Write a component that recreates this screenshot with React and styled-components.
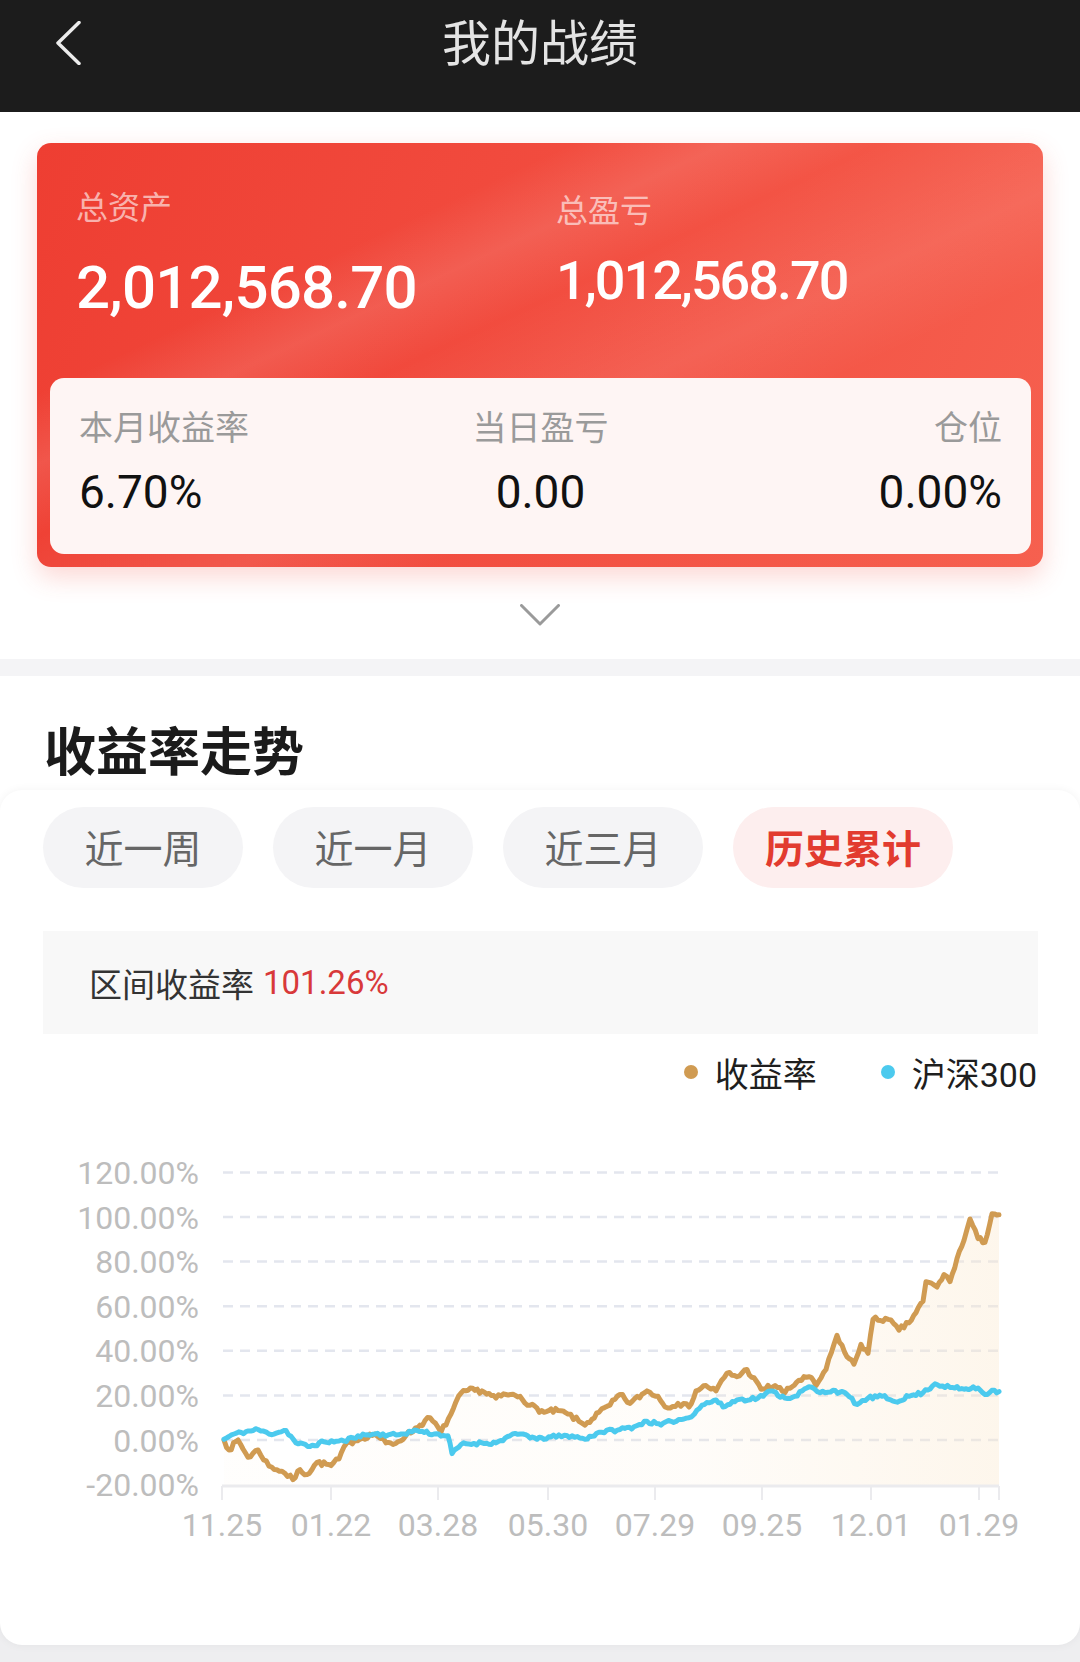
import styled, { createGlobalStyle } from "styled-components";

const GlobalStyle = createGlobalStyle`
  body {
    margin: 0;
    background: #f1f1f3;
    font-family: Roboto, "Noto Sans CJK SC", sans-serif;
  }
`;

const Page = styled.div`
  width: 1080px;
  margin: 0 auto;
`;

const Header = styled.header`
  height: 112px;
  background: #1c1c1c;
  display: grid;
  grid-template-columns: 1fr auto 1fr;
  align-items: start;
`;

const BackButton = styled.button`
  justify-self: start;
  border: 0;
  background: none;
  padding: 21px 0 0 55px;
  cursor: pointer;
  svg {
    display: block;
  }
`;

const Title = styled.h1`
  margin: 0;
  font-size: 49px;
  line-height: 90px;
  font-weight: 400;
  color: #e4e4e4;
`;

const SummarySection = styled.section`
  background: #fff;
  padding: 31px 37px 0;
`;

const AssetCard = styled.div`
  height: 424px;
  box-sizing: border-box;
  border-radius: 14px;
  display: flex;
  flex-direction: column;
  box-shadow: 0 10px 26px rgba(242, 72, 58, 0.22);
  background:
    linear-gradient(
      155deg,
      rgba(255, 255, 255, 0) 28%,
      rgba(255, 255, 255, 0.11) 36%,
      rgba(255, 255, 255, 0) 44%,
      rgba(255, 255, 255, 0.09) 58%,
      rgba(255, 255, 255, 0) 68%
    ),
    linear-gradient(110deg, #ee3e32 0%, #f14a3d 40%, #f6604f 100%);
`;

const TopArea = styled.div`
  height: 235px;
  display: grid;
  grid-template-columns: 480px 1fr;
  padding-left: 39px;
`;

const TopColumn = styled.div`
  display: flex;
  flex-direction: column;
  padding-top: ${(p) => p.$top}px;
`;

const TopLabel = styled.div`
  font-size: 32px;
  line-height: 44px;
  color: rgba(255, 255, 255, 0.62);
`;

const Amount = styled.div`
  margin-top: ${(p) => p.$gap}px;
  font-size: ${(p) => p.$size}px;
  line-height: ${(p) => p.$size * 1.2}px;
  letter-spacing: ${(p) => p.$spacing}px;
  font-weight: 500;
  color: #fff;
`;

const StatsPanel = styled.div`
  margin: 0 12px 13px 13px;
  height: 176px;
  box-sizing: border-box;
  border-radius: 14px;
  background: #fef5f4;
  padding: 27px 29px 0;
  display: grid;
  grid-template-columns: repeat(3, 1fr);
`;

const Stat = styled.div`
  display: flex;
  flex-direction: column;
  align-items: ${(p) => p.$align};
`;

const StatLabel = styled.div`
  font-size: 34px;
  line-height: 46px;
  color: #9a9a9a;
`;

const StatValue = styled.div`
  margin-top: 13px;
  font-size: 46px;
  line-height: 56px;
  color: #111;
`;

const ExpandRow = styled.div`
  height: 92px;
  box-sizing: border-box;
  padding-top: 37px;
  display: flex;
  justify-content: center;
  svg {
    display: block;
  }
`;

const Divider = styled.div`
  height: 17px;
  background: #f4f4f6;
`;

const TrendSection = styled.section`
  padding: 48px 0 17px;
  background: linear-gradient(
    to bottom,
    #fff calc(100% - 40px),
    #eeeef0 calc(100% - 40px)
  );
`;

const SectionTitle = styled.h2`
  margin: 0 0 0 44px;
  font-size: 52px;
  line-height: 60px;
  font-weight: 700;
  color: #1b1b1b;
`;

const ChartCard = styled.div`
  margin-top: 6px;
  height: 855px;
  box-sizing: border-box;
  padding: 17px 0 90px;
  background: #fff;
  border-radius: 22px;
  box-shadow: 0 0 10px rgba(0, 0, 0, 0.05);
`;

const Tabs = styled.div`
  display: flex;
  gap: 30px;
  padding: 0 43px;
`;

const Tab = styled.button`
  height: 81px;
  min-width: 200px;
  padding: 0 32px 4px;
  border: 0;
  border-radius: 41px;
  display: flex;
  align-items: center;
  justify-content: center;
  font-family: inherit;
  font-size: 39px;
  font-weight: ${(p) => (p.$active ? 700 : 400)};
  color: ${(p) => (p.$active ? "#e23b2f" : "#666")};
  background: ${(p) => (p.$active ? "#fdeeee" : "#f4f4f6")};
`;

const RangeBox = styled.div`
  margin: 43px 42px 0 43px;
  height: 103px;
  padding-left: 46px;
  display: flex;
  align-items: center;
  background: #f8f8f8;
  font-size: 33px;
  color: #333;
`;

const RangeValue = styled.span`
  margin-left: 9px;
  color: #d8393a;
`;

const Legend = styled.div`
  margin-top: 15px;
  height: 46px;
  padding-right: 43px;
  display: flex;
  justify-content: flex-end;
  align-items: center;
  gap: 64px;
`;

const LegendItem = styled.div`
  display: flex;
  align-items: center;
  gap: 17px;
  font-size: 34px;
  color: #1e1e1e;
`;

const Dot = styled.span`
  width: 14px;
  height: 14px;
  border-radius: 50%;
  background: ${(p) => p.$color};
`;

const ChartSvg = styled.svg`
  display: block;
  width: 1080px;
  height: 460px;
  font-family: Roboto, sans-serif;
`;

// key points [x, percent], read off the screenshot
const goldKeys = [
  [224, 0], [229, -4.5], [238, 0], [248, -7.7], [258, -4.5], [269, -11.7],
  [282, -14], [293, -17.8], [300, -13.3], [307, -15.5], [317, -10], [331, -11.5],
  [339, -8.5], [344, -3], [355, 0], [375, 2.7], [386, -1.3], [393, -2],
  [406, 2], [420, 6.7], [430, 10], [441, 3.5], [451, 11.6], [461, 21],
  [468, 22.3], [482, 22], [496, 18.8], [506, 20.4], [520, 19.6], [530, 15.6],
  [544, 12.4], [558, 13.2], [568, 11.6], [579, 8.4], [585, 6.7], [599, 12.4],
  [610, 15.6], [620, 20.4], [630, 16.4], [647, 22], [658, 19.6], [665, 14.8],
  [678, 16.4], [689, 14.8], [696, 22], [706, 24.4], [716, 22], [727, 30],
  [737, 28.4], [747, 31.6], [761, 22.8], [775, 24.4], [785, 21.2], [799, 26.8],
  [809, 28.4], [816, 24.4], [826, 31.6], [837, 46.9], [847, 37.3], [854, 34],
  [861, 42.9], [868, 38.9], [873, 54.1], [888, 54.1], [899, 49.3], [909, 52.5],
  [923, 62.2], [926, 71], [937, 68.6], [944, 74.2], [950, 71], [957, 81.4],
  [964, 89.5], [970, 99.1], [978, 90.3], [985, 88.7], [992, 101.5], [999, 101],
];

const blueKeys = [
  [224, 0.3], [234, 2.7], [258, 4.7], [269, 2.7], [286, 4.3], [296, -1.3],
  [310, -2.9], [324, -0.8], [344, -0.5], [358, 1.9], [375, 2.7], [396, 2.2],
  [417, 4.3], [434, 2.7], [448, 1.9], [452, -6.1], [461, -2], [482, -1.3],
  [496, -1.3], [510, 1.9], [523, 2.7], [537, 0.3], [551, 1.4], [572, 1.9],
  [585, 0.3], [599, 3.5], [620, 4.7], [634, 5.9], [647, 8.4], [661, 6.7],
  [671, 8.4], [689, 10], [702, 15.6], [716, 18], [723, 14.8], [737, 18],
  [758, 18.8], [771, 22], [785, 18.8], [795, 19.6], [809, 23.9], [820, 21.2],
  [833, 22.3], [847, 20.4], [857, 15.9], [868, 18.8], [882, 19.6], [895, 17.2],
  [909, 19.6], [923, 21.2], [935, 25.2], [950, 23.6], [964, 22.8], [978, 23.3],
  [985, 20.4], [992, 22.3], [999, 21.7],
];

const mulberry32 = (a) => () => {
  a |= 0;
  a = (a + 0x6d2b79f5) | 0;
  let t = Math.imul(a ^ (a >>> 15), 1 | a);
  t = (t + Math.imul(t ^ (t >>> 7), 61 | t)) ^ t;
  return ((t ^ (t >>> 14)) >>> 0) / 4294967296;
};

const roughen = (keys, seed, amp) => {
  const rnd = mulberry32(seed);
  const out = [];
  for (let i = 0; i < keys.length - 1; i++) {
    const [x0, v0] = keys[i];
    const [x1, v1] = keys[i + 1];
    const n = Math.max(1, Math.round((x1 - x0) / 2.5));
    for (let k = 0; k < n; k++) {
      const t = k / n;
      const jitter = k === 0 ? 0 : (rnd() - 0.5) * amp;
      out.push([x0 + (x1 - x0) * t, v0 + (v1 - v0) * t + jitter]);
    }
  }
  out.push(keys[keys.length - 1]);
  return out;
};

const toY = (v) => 1440 - 2.23 * v;
const toPath = (pts) =>
  pts.map(([x, v], i) => `${i ? "L" : "M"}${x.toFixed(1)},${toY(v).toFixed(1)}`).join("");

const goldPts = roughen(goldKeys, 7, 2.2);
const bluePts = roughen(blueKeys, 11, 1.6);
const goldPath = toPath(goldPts);
const bluePath = toPath(bluePts);
const goldArea = `${goldPath}L999,1486L224,1486Z`;

const gridValues = [120, 100, 80, 60, 40, 20, 0];
const yLabels = [120, 100, 80, 60, 40, 20, 0, -20];
const ticks = [222, 331, 438, 548, 655, 762, 871, 979, 999];
const xLabels = [
  [222, "11.25"], [331, "01.22"], [438, "03.28"], [548, "05.30"],
  [655, "07.29"], [762, "09.25"], [871, "12.01"], [979, "01.29"],
];

const TrendChart = () => (
  <ChartSvg viewBox="0 1095 1080 460">
    <defs>
      <linearGradient id="goldFill" x1="224" x2="999" y1="0" y2="0" gradientUnits="userSpaceOnUse">
        <stop offset="0" stopColor="#fbe9cf" stopOpacity="0.05" />
        <stop offset="0.6" stopColor="#fbe9cf" stopOpacity="0.12" />
        <stop offset="1" stopColor="#fbe9cf" stopOpacity="0.4" />
      </linearGradient>
    </defs>
    {gridValues.map((v) => (
      <line key={v} x1="223" x2="999" y1={toY(v)} y2={toY(v)} stroke="#e3e6ee" strokeWidth="2.5" strokeDasharray="10 7" />
    ))}
    {yLabels.map((v) => (
      <text key={v} x="199" y={toY(v)} dy="0.36em" textAnchor="end" fontSize="32" fill="#bdbdbd">
        {`${v.toFixed(2)}%`}
      </text>
    ))}
    <path d={goldArea} fill="url(#goldFill)" />
    <line x1="222" x2="999" y1="1486" y2="1486" stroke="#ebebee" strokeWidth="3" />
    {ticks.map((x) => (
      <line key={x} x1={x} x2={x} y1="1486" y2="1500" stroke="#ebebee" strokeWidth="2" />
    ))}
    {xLabels.map(([x, t]) => (
      <text key={t} x={x} y="1524" dy="0.36em" textAnchor="middle" fontSize="32" fill="#bdbdbd">
        {t}
      </text>
    ))}
    <path d={goldPath} fill="none" stroke="#d09b52" strokeWidth="5" strokeLinejoin="round" strokeLinecap="round" />
    <path d={bluePath} fill="none" stroke="#4ccaee" strokeWidth="5" strokeLinejoin="round" strokeLinecap="round" />
  </ChartSvg>
);

const tabs = ["近一周", "近一月", "近三月", "历史累计"];

export default function App() {
  return (
    <Page>
      <GlobalStyle />
      <Header>
        <BackButton aria-label="返回">
          <svg width="26" height="44" viewBox="0 0 26 44">
            <polyline points="24,1.5 3,22 24,42.5" fill="none" stroke="#ececec" strokeWidth="3.5" strokeLinecap="round" strokeLinejoin="round" />
          </svg>
        </BackButton>
        <Title>我的战绩</Title>
        <div />
      </Header>

      <SummarySection>
        <AssetCard>
          <TopArea>
            <TopColumn $top={43}>
              <TopLabel>总资产</TopLabel>
              <Amount $gap={22} $size={60} $spacing={-0.8}>2,012,568.70</Amount>
            </TopColumn>
            <TopColumn $top={46}>
              <TopLabel>总盈亏</TopLabel>
              <Amount $gap={16} $size={54} $spacing={-2}>1,012,568.70</Amount>
            </TopColumn>
          </TopArea>
          <StatsPanel>
            <Stat $align="flex-start">
              <StatLabel>本月收益率</StatLabel>
              <StatValue>6.70%</StatValue>
            </Stat>
            <Stat $align="center">
              <StatLabel>当日盈亏</StatLabel>
              <StatValue>0.00</StatValue>
            </Stat>
            <Stat $align="flex-end">
              <StatLabel>仓位</StatLabel>
              <StatValue>0.00%</StatValue>
            </Stat>
          </StatsPanel>
        </AssetCard>
        <ExpandRow>
          <svg width="40" height="22" viewBox="0 0 40 22">
            <polyline points="1.5,1.5 20,20 38.5,1.5" fill="none" stroke="#9a9a9a" strokeWidth="3" strokeLinecap="round" strokeLinejoin="round" />
          </svg>
        </ExpandRow>
      </SummarySection>

      <Divider />

      <TrendSection>
        <SectionTitle>收益率走势</SectionTitle>
        <ChartCard>
          <Tabs>
            {tabs.map((t) => (
              <Tab key={t} $active={t === "历史累计"}>
                {t}
              </Tab>
            ))}
          </Tabs>
          <RangeBox>
            区间收益率<RangeValue>101.26%</RangeValue>
          </RangeBox>
          <Legend>
            <LegendItem>
              <Dot $color="#d09b52" />
              收益率
            </LegendItem>
            <LegendItem>
              <Dot $color="#4ccaee" />
              沪深300
            </LegendItem>
          </Legend>
          <TrendChart />
        </ChartCard>
      </TrendSection>
    </Page>
  );
}
